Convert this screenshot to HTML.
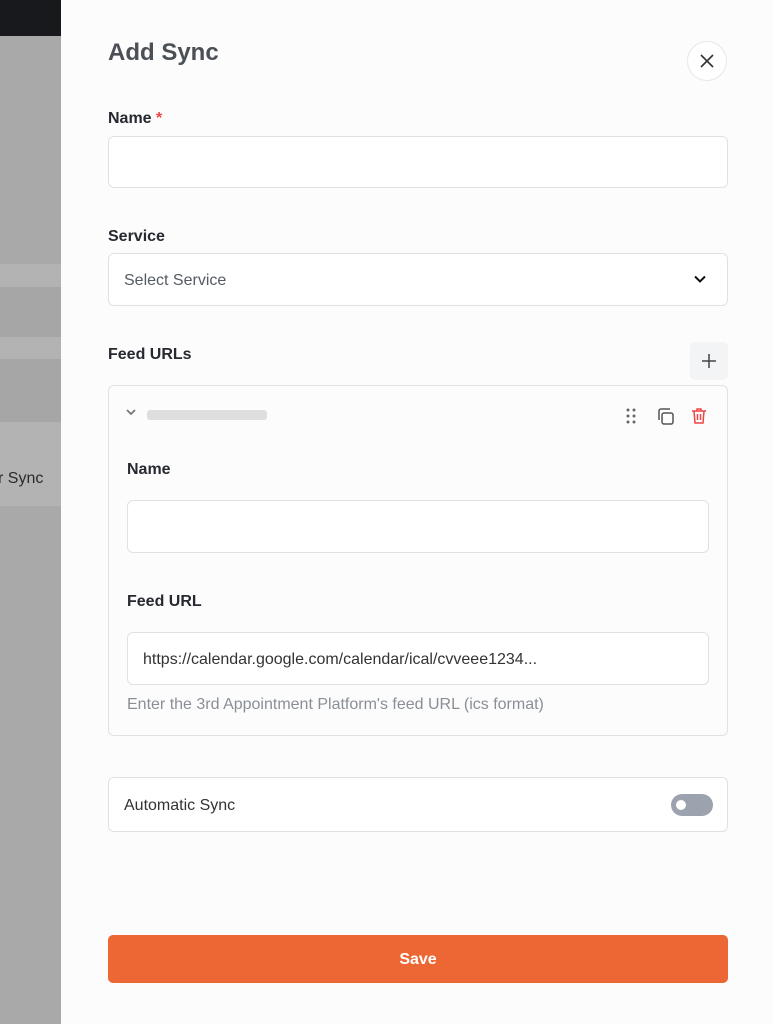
<!DOCTYPE html>
<html><head><style>
*{box-sizing:border-box;margin:0;padding:0}
body{width:773px;height:1024px;position:relative;overflow:hidden;font-family:"Liberation Sans",sans-serif;background:#fcfcfc;color:#1f2937}
.l{position:absolute;left:0;width:61px}
.p{position:absolute;left:61px;top:0;width:712px;height:1024px;background:#fcfcfc}
.a{position:absolute}
.lab{position:absolute;font-size:16px;font-weight:bold;color:#262a30}
.inp{position:absolute;background:#fff;border:1px solid #dfe1e4;border-radius:6px}
</style></head><body>
<div class="l" style="top:0;height:36px;background:#17191c"></div>
<div class="l" style="top:36px;height:228px;background:#a9a9a9"></div>
<div class="l" style="top:264px;height:23px;background:#b3b3b3"></div>
<div class="l" style="top:287px;height:50px;background:#a6a6a6"></div>
<div class="l" style="top:337px;height:22px;background:#b3b3b3"></div>
<div class="l" style="top:359px;height:63px;background:#a6a6a6"></div>
<div class="l" style="top:422px;height:84px;background:#b3b3b3"></div>
<div class="l" style="top:506px;height:518px;background:#a9a9a9"></div>
<div class="a" style="left:-2px;top:470px;font-size:16px;color:#2a2a2a;white-space:nowrap">r Sync</div>
<div class="p"></div>
<div class="a" style="left:108px;top:39px;font-size:24px;font-weight:bold;color:#4b4f56">Add Sync</div>
<div class="a" style="left:687px;top:41px;width:40px;height:40px;border:1px solid #e5e7eb;border-radius:50%;background:#fff"><svg width="40" height="40" viewBox="0 0 40 40" style="position:absolute;left:-1px;top:-1px"><path d="M14 14L26 26M26 14L14 26" stroke="#333" stroke-width="1.6"/></svg></div>
<div class="lab" style="left:108px;top:110px">Name <span style="color:#ef4444">*</span></div>
<div class="inp" style="left:108px;top:136px;width:620px;height:52px"></div>
<div class="lab" style="left:108px;top:228px">Service</div>
<div class="inp" style="left:108px;top:253px;width:620px;height:53px"><span class="a" style="left:15px;top:18px;font-size:16px;color:#555b63">Select Service</span><svg class="a" style="left:584px;top:18px" width="14" height="14" viewBox="0 0 14 14"><path d="M2 4.5L7 9.5L12 4.5" fill="none" stroke="#111" stroke-width="2"/></svg></div>
<div class="lab" style="left:108px;top:346px">Feed URLs</div>
<div class="a" style="left:690px;top:342px;width:38px;height:38px;background:#f3f4f6;border-radius:5px"><svg width="38" height="38"><path d="M19 12V26M12 19H26" stroke="#444" stroke-width="1.5"/></svg></div>
<div class="inp" style="left:108px;top:385px;width:620px;height:351px;background:#fcfcfc">
<svg class="a" style="left:16px;top:22px" width="12" height="10"><path d="M2 2L6 6L10 2" fill="none" stroke="#777" stroke-width="1.8"/></svg>
<div class="a" style="left:38px;top:24px;width:120px;height:10px;background:#dedede;border-radius:3px"></div>
<svg class="a" style="left:515px;top:20px" width="14" height="20"><g fill="#666"><circle cx="4" cy="4" r="1.5"/><circle cx="10" cy="4" r="1.5"/><circle cx="4" cy="10" r="1.5"/><circle cx="10" cy="10" r="1.5"/><circle cx="4" cy="16" r="1.5"/><circle cx="10" cy="16" r="1.5"/></g></svg>
<svg class="a" style="left:546px;top:20px" width="20" height="20"><rect x="7" y="7" width="11" height="11" rx="2" fill="none" stroke="#555" stroke-width="1.5"/><path d="M4 14V5a2 2 0 0 1 2-2h9" fill="none" stroke="#555" stroke-width="1.5"/></svg>
<svg class="a" style="left:580px;top:20px" width="20" height="20"><path d="M3 5h14M8 5V3h4v2M5 5l1 12h8l1-12M8.5 8v6M11.5 8v6" fill="none" stroke="#ef4444" stroke-width="1.5"/></svg>
<div class="lab" style="left:18px;top:75px">Name</div>
<div class="inp" style="left:18px;top:114px;width:582px;height:53px"></div>
<div class="lab" style="left:18px;top:207px">Feed URL</div>
<div class="inp" style="left:18px;top:246px;width:582px;height:53px"><span class="a" style="left:15px;top:18px;font-size:16px;color:#333">https://calendar.google.com/calendar/ical/cvveee1234...</span></div>
<div class="a" style="left:18px;top:310px;font-size:16px;color:#8a8f96">Enter the 3rd Appointment Platform's feed URL (ics format)</div>
</div>
<div class="inp" style="left:108px;top:777px;width:620px;height:55px"><span class="a" style="left:15px;top:19px;font-size:16px;color:#333">Automatic Sync</span><div class="a" style="left:562px;top:16px;width:42px;height:22px;border-radius:11px;background:#9ca3af"><div class="a" style="left:5px;top:6px;width:10px;height:10px;border-radius:50%;background:#fff"></div></div></div>
<div class="a" style="left:108px;top:935px;width:620px;height:48px;background:#ec6734;border-radius:5px;color:#fff;font-weight:bold;font-size:16px;text-align:center;line-height:49px">Save</div>
</body></html>
